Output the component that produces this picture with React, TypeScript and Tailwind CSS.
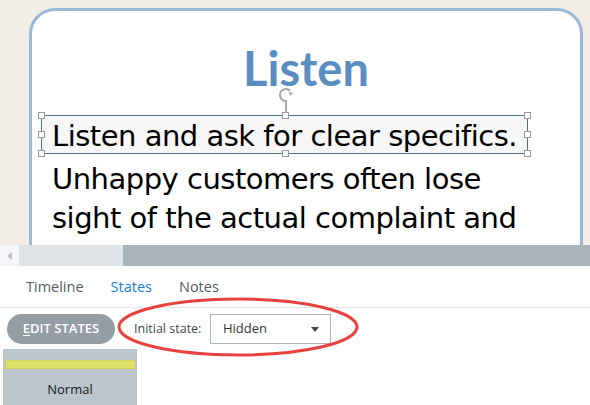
import React from "react";

const SLIDE_FONT = { fontFamily: '"DejaVu Sans", "Liberation Sans", sans-serif' };
const TITLE_FONT = { fontFamily: 'Lato, "DejaVu Sans", sans-serif' };
const UI_FONT = { fontFamily: '"Open Sans", "Noto Sans", sans-serif' };

function Handle({ className }: { className: string }) {
  return (
    <div
      className={`absolute w-[7px] h-[7px] bg-white border border-[#9a9a9a] ${className}`}
    />
  );
}

function Slide() {
  return (
    <div className="h-[245px] shrink-0 overflow-hidden bg-[#f3ede7] pl-[29px] pr-[7px] pt-[8px]">
      <div className="h-[320px] rounded-[26px] border-[3px] border-[#9ab9d6] bg-white" style={SLIDE_FONT}>
        {/* title */}
        <div className="pt-[27px] text-center text-[47px] leading-[60px] font-bold text-[#5a8dc0]" style={TITLE_FONT}>
          Listen
        </div>

        {/* selected text box */}
        <div className="relative mt-[17px] ml-[9px] w-[487px] h-[39px] border border-[#4f6f9a] bg-[#f7f7f7] pl-[10px] pt-[2px] text-[29px] leading-[37px] text-black tracking-[-0.5px]">
          Listen and ask for clear specifics.
          <Handle className="-left-[4px] -top-[4px]" />
          <Handle className="-left-[4px] top-[15px]" />
          <Handle className="-left-[4px] -bottom-[4px]" />
          <Handle className="-right-[4px] -top-[4px]" />
          <Handle className="-right-[4px] top-[15px]" />
          <Handle className="-right-[4px] -bottom-[4px]" />
          <Handle className="left-[240px] -top-[4px]" />
          <Handle className="left-[240px] -bottom-[4px]" />
          {/* rotate handle */}
          <svg className="absolute left-[235px] -top-[30px]" width="18" height="27" viewBox="0 0 18 27" fill="none">
            <path d="M13.2 4.8 A6 6 0 1 0 9 15 L9 27" stroke="#a3a3a3" strokeWidth="1.8" />
            <path d="M11.2 6.6 L16.2 6.6 L13.7 9.8 Z" fill="#a3a3a3" />
          </svg>
        </div>

        <div className="mt-[6px] pl-[20px] text-[29px] leading-[39px] text-black tracking-[-0.5px]">
          <div>Unhappy customers often lose</div>
          <div>sight of the actual complaint and</div>
        </div>
      </div>
    </div>
  );
}

function Scrollbar() {
  return (
    <div className="flex h-[21px] shrink-0 bg-[#a9b3bc]">
      <div className="flex w-[19px] items-center justify-center bg-[#f5f6f7]">
        <div className="h-0 w-0 border-y-[4px] border-r-[5px] border-y-transparent border-r-[#b5bcc3]" />
      </div>
      <div className="w-[104px] bg-[#dfe3e7]" />
    </div>
  );
}

export default function App() {
  return (
    <div className="relative w-[590px] h-[405px] overflow-hidden bg-white flex flex-col">
      <Slide />
      <Scrollbar />

      {/* tabs */}
      <div className="flex h-[42px] shrink-0 items-center gap-[27px] border-b border-[#e3e3e3] pl-[26px] text-[14.5px]" style={UI_FONT}>
        <span className="text-[#555b61]">Timeline</span>
        <span className="text-[#1c7fd9]">States</span>
        <span className="text-[#555b61]">Notes</span>
      </div>

      {/* toolbar */}
      <div className="mt-[6px] flex shrink-0 items-center pl-[7px]" style={UI_FONT}>
        <button className="h-[30px] w-[108px] rounded-full bg-[#959da5] text-[13px] font-semibold text-white">
          <span className="underline underline-offset-2">E</span>DIT STATES
        </button>
        <span className="ml-[19px] w-[76px] text-[12.5px] text-[#444a50]">Initial state:</span>
        <div className="flex h-[30px] w-[121px] items-center justify-between border border-[#aab4bd] pl-[12px] pr-[11px] text-[13px] text-[#333]">
          <span>Hidden</span>
          <div className="h-0 w-0 border-x-[4px] border-t-[5px] border-x-transparent border-t-[#444]" />
        </div>
      </div>

      {/* state thumbnail */}
      <div className="ml-[3px] mt-[5px] flex h-[60px] w-[134px] shrink-0 flex-col bg-[#bcc4cc] px-[2px] pt-[11px]" style={UI_FONT}>
        <div className="h-[9px] bg-[#dde064] border border-[#d3d65a]" />
        <div className="mt-[11px] text-center text-[13px] text-[#1a1a1a]">Normal</div>
      </div>

      {/* red highlight ellipse */}
      <svg className="absolute left-0 top-0 pointer-events-none" width="590" height="405">
        <ellipse cx="238" cy="327" rx="119" ry="28" fill="none" stroke="#e8423f" strokeWidth="3" />
      </svg>
    </div>
  );
}
